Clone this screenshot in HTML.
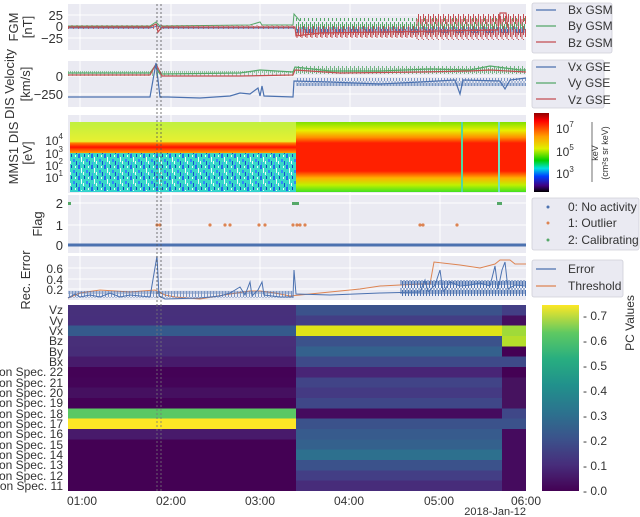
<!DOCTYPE html>
<html><head><meta charset="utf-8"><style>
html,body{margin:0;padding:0;background:#fff;}
svg{display:block;font-family:"Liberation Sans",sans-serif;}
</style></head><body>
<svg width="640" height="517" viewBox="0 0 640 517" xmlns="http://www.w3.org/2000/svg">
<defs>
<linearGradient id="sr" x1="0" y1="0" x2="0" y2="1">
<stop offset="0" stop-color="#7fe000"/><stop offset="0.12" stop-color="#e8f000"/><stop offset="0.22" stop-color="#ff9000"/><stop offset="0.3" stop-color="#ff2000"/><stop offset="0.7" stop-color="#ff2000"/><stop offset="0.8" stop-color="#ffb000"/><stop offset="0.9" stop-color="#c0f000"/><stop offset="1" stop-color="#40e020"/>
</linearGradient>
<linearGradient id="sl" x1="0" y1="0" x2="0" y2="1">
<stop offset="0" stop-color="#c0f040"/><stop offset="0.28" stop-color="#e8f030"/><stop offset="0.3" stop-color="#ff8000"/><stop offset="0.36" stop-color="#ff1000"/><stop offset="0.44" stop-color="#ffa000"/><stop offset="0.46" stop-color="#40e0c0"/><stop offset="1" stop-color="#30d0d0"/>
</linearGradient>
<linearGradient id="cb" x1="0" y1="0" x2="0" y2="1">
<stop offset="0" stop-color="#900000"/><stop offset="0.1" stop-color="#ff0000"/><stop offset="0.3" stop-color="#ffa000"/><stop offset="0.45" stop-color="#e0f000"/><stop offset="0.6" stop-color="#00d000"/><stop offset="0.7" stop-color="#00e0e0"/><stop offset="0.8" stop-color="#0040ff"/><stop offset="0.92" stop-color="#400080"/><stop offset="1" stop-color="#000"/>
</linearGradient>
<linearGradient id="vir" x1="0" y1="1" x2="0" y2="0">
<stop offset="0" stop-color="#440154"/><stop offset="0.14" stop-color="#472d7b"/><stop offset="0.28" stop-color="#3b528b"/><stop offset="0.42" stop-color="#2c728e"/><stop offset="0.57" stop-color="#21918c"/><stop offset="0.71" stop-color="#28ae80"/><stop offset="0.85" stop-color="#5ec962"/><stop offset="1" stop-color="#fde725"/>
</linearGradient>
<pattern id="noise" width="13" height="11" patternUnits="userSpaceOnUse">
<rect width="13" height="11" fill="#38d8c8"/><rect x="0" y="0" width="2" height="4" fill="#2060f0"/><rect x="3" y="3" width="1" height="5" fill="#ffffff"/><rect x="6" y="0" width="1" height="3" fill="#1030c0"/><rect x="8" y="5" width="2" height="3" fill="#3080ff"/><rect x="5" y="7" width="1" height="3" fill="#fff"/><rect x="10" y="1" width="1" height="2" fill="#fff"/><rect x="11" y="7" width="1" height="4" fill="#1040d0"/><rect x="1" y="8" width="1" height="3" fill="#4090ff"/>
</pattern>
<pattern id="rn" width="5" height="13" patternUnits="userSpaceOnUse">
<line x1="0.5" y1="3" x2="0.5" y2="11" stroke="#c44e52"/><line x1="2" y1="6" x2="2" y2="13" stroke="#c44e52"/><line x1="3.5" y1="0" x2="3.5" y2="9" stroke="#c44e52"/>
</pattern>
<pattern id="gn" width="4" height="11" patternUnits="userSpaceOnUse">
<line x1="0.5" y1="2" x2="0.5" y2="10" stroke="#55a868"/><line x1="2.5" y1="0" x2="2.5" y2="7" stroke="#55a868"/>
</pattern>
<pattern id="bn" width="3" height="9" patternUnits="userSpaceOnUse">
<line x1="0.5" y1="2" x2="0.5" y2="9" stroke="#4c72b0"/><line x1="2" y1="0" x2="2" y2="6" stroke="#4c72b0"/>
</pattern>
</defs>

<g fill="#eaeaf2">
<rect x="68" y="4" width="458" height="46"/>
<rect x="68" y="61" width="458" height="46"/>
<rect x="68" y="115" width="458" height="78"/>
<rect x="68" y="195" width="458" height="58"/>
<rect x="68" y="256" width="458" height="44"/>
</g>
<g stroke="#fff" stroke-width="1">
<line x1="68" y1="15" x2="526" y2="15"/><line x1="68" y1="27" x2="526" y2="27"/><line x1="68" y1="38" x2="526" y2="38"/>
<line x1="68" y1="76" x2="526" y2="76"/><line x1="68" y1="94" x2="526" y2="94"/>
<line x1="68" y1="203" x2="526" y2="203"/><line x1="68" y1="225" x2="526" y2="225"/><line x1="68" y1="245" x2="526" y2="245"/>
<line x1="68" y1="268" x2="526" y2="268"/><line x1="68" y1="279" x2="526" y2="279"/><line x1="68" y1="289" x2="526" y2="289"/>
</g>
<g stroke="#fff" stroke-width="1">
<line x1="80" y1="4" x2="80" y2="300"/><line x1="171" y1="4" x2="171" y2="300"/><line x1="260" y1="4" x2="260" y2="300"/><line x1="350" y1="4" x2="350" y2="300"/><line x1="440" y1="4" x2="440" y2="300"/>
</g>

<!-- FGM -->
<rect x="296" y="18" width="230" height="12" fill="url(#gn)"/>
<rect x="296" y="27" width="230" height="6" fill="url(#bn)"/>
<rect x="296" y="26" width="120" height="12" fill="url(#rn)"/>
<rect x="416" y="14" width="110" height="26" fill="url(#rn)"/>
<polyline fill="none" stroke="#4c72b0" stroke-width="1" points="68,28 150,28 158,26 162,28 295,28"/>
<polyline fill="none" stroke="#55a868" stroke-width="1" points="68,26 150,26 156,22 160,26 250,25 260,22 262,25 293,25 294,14 300,21"/>
<polyline fill="none" stroke="#c44e52" stroke-width="1.2" points="68,27 150,27 156,24 158,32 162,27 295,27 296,36 320,33 498,30 500,13 506,13 508,28"/>
<rect x="68" y="25" width="226" height="4" fill="url(#rn)" opacity="0.8"/>
<!-- DIS vel -->
<rect x="296" y="66" width="230" height="8" fill="url(#gn)" opacity="0.8"/>
<rect x="68" y="71" width="226" height="6" fill="url(#gn)" opacity="0.6"/>
<polyline fill="none" stroke="#55a868" stroke-width="1.2" points="68,73 150,73 155,66 160,74 240,73 260,70 293,72 295,67 330,71 380,71 430,69 470,70 490,66 520,70 526,70"/>
<polyline fill="none" stroke="#c44e52" stroke-width="1.2" points="68,75 150,75 156,64 162,76 240,76 293,75 295,70 340,73 420,72 470,71 490,70 526,72"/>
<rect x="296" y="78" width="230" height="8" fill="url(#bn)" opacity="0.7"/>
<polyline fill="none" stroke="#4c72b0" stroke-width="1.2" points="68,97 150,97 156,63 160,97 168,97 200,98 230,96 240,93 250,94 258,88 260,96 262,86 264,96 293,97 294,81 330,82 380,84 420,82 455,80 460,94 463,80 500,81 505,89 510,80 526,78"/>

<!-- Spectrogram -->
<rect x="70" y="122" width="226" height="70" fill="url(#sl)"/>
<rect x="70" y="153" width="226" height="38" fill="url(#noise)" opacity="0.9"/>
<rect x="296" y="122" width="230" height="70" fill="url(#sr)"/>
<rect x="461" y="122" width="2" height="70" fill="#50d8a0"/>
<rect x="498" y="122" width="2" height="70" fill="#70e0c0"/>
<rect x="534" y="113" width="15" height="79" fill="url(#cb)"/>
<g font-size="12" fill="#333"><text x="556" y="133">10<tspan font-size="8" dy="-6">7</tspan></text><text x="556" y="156">10<tspan font-size="8" dy="-6">5</tspan></text><text x="556" y="178">10<tspan font-size="8" dy="-6">3</tspan></text></g>
<text transform="translate(598,153) rotate(-90)" font-size="9" fill="#333" text-anchor="middle">keV</text>
<text transform="translate(608,153) rotate(-90)" font-size="9" fill="#333" text-anchor="middle">(cm²s sr keV)</text>
<line x1="592" y1="122" x2="592" y2="182" stroke="#333" stroke-width="0.7"/>

<!-- Flag -->
<line x1="68" y1="245" x2="526" y2="245" stroke="#4c72b0" stroke-width="3"/>
<g fill="#dd8452"><circle cx="157" cy="225" r="1.6"/><circle cx="160" cy="225" r="1.6"/><circle cx="210" cy="225" r="1.6"/><circle cx="225" cy="225" r="1.6"/><circle cx="230" cy="225" r="1.6"/><circle cx="259" cy="225" r="1.6"/><circle cx="265" cy="225" r="1.6"/><circle cx="293" cy="225" r="1.6"/><circle cx="297" cy="225" r="1.6"/><circle cx="300" cy="225" r="1.6"/><circle cx="305" cy="225" r="1.6"/><circle cx="420" cy="225" r="1.6"/><circle cx="423" cy="225" r="1.6"/><circle cx="457" cy="225" r="1.6"/></g>
<g fill="#55a868"><rect x="68" y="202" width="3" height="3"/><rect x="292" y="202" width="7" height="3"/><rect x="497" y="202" width="5" height="3"/></g>

<!-- Rec error -->
<polyline fill="none" stroke="#dd8452" stroke-width="1" points="68,298 80,293 100,290 130,292 155,290 165,295 175,297 200,299 230,294 250,291 260,291 275,293 290,296 320,293 360,289 380,286 400,285 420,284 430,284 434,262 460,265 480,268 495,264 500,260 510,260 515,264 526,264"/>
<rect x="68" y="291" width="226" height="7" fill="url(#bn)" opacity="0.7"/>
<rect x="400" y="280" width="126" height="16" fill="url(#bn)"/>
<polyline fill="none" stroke="#4c72b0" stroke-width="1" points="68,298 75,294 80,297 90,295 100,297 110,293 120,297 130,295 150,297 157,256 159,296 165,299 200,298 220,296 230,293 240,287 245,295 250,282 252,296 258,290 262,282 264,295 280,297 293,297 294,270 296,294 330,295 380,293 420,292 425,280 428,292 435,285 440,270 443,292 450,282 460,286 470,285 480,283 490,286 495,266 498,289 502,270 505,262 508,289 515,285 526,286"/>

<g stroke="#555" stroke-width="0.8" stroke-dasharray="2,2">
<line x1="157" y1="4" x2="157" y2="491"/><line x1="161" y1="4" x2="161" y2="491"/>
</g>

<!-- Heatmap -->
<g shape-rendering="crispEdges">
<rect x="68" y="305" width="228" height="11" fill="#47307b"/><rect x="296" y="305" width="206" height="11" fill="#3b528b"/><rect x="502" y="305" width="24" height="11" fill="#433e85"/>
<rect x="68" y="315.3" width="228" height="11" fill="#472f7c"/><rect x="296" y="315.3" width="206" height="11" fill="#433e85"/><rect x="502" y="315.3" width="24" height="11" fill="#450f5f"/>
<rect x="68" y="325.7" width="228" height="11" fill="#355a8c"/><rect x="296" y="325.7" width="206" height="11" fill="#dfe318"/><rect x="502" y="325.7" width="24" height="11" fill="#a0da39"/>
<rect x="68" y="336" width="228" height="11" fill="#482f79"/><rect x="296" y="336" width="206" height="11" fill="#3b528b"/><rect x="502" y="336" width="24" height="11" fill="#b5de2b"/>
<rect x="68" y="346.3" width="228" height="11" fill="#472d78"/><rect x="296" y="346.3" width="206" height="11" fill="#34618d"/><rect x="502" y="346.3" width="24" height="11" fill="#440154"/>
<rect x="68" y="356.7" width="228" height="11" fill="#471b6b"/><rect x="296" y="356.7" width="206" height="11" fill="#3e4a89"/><rect x="502" y="356.7" width="24" height="11" fill="#3e4a89"/>
<rect x="68" y="367" width="228" height="11" fill="#440256"/><rect x="296" y="367" width="206" height="11" fill="#482576"/><rect x="502" y="367" width="24" height="11" fill="#440154"/>
<rect x="68" y="377.3" width="228" height="11" fill="#440458"/><rect x="296" y="377.3" width="206" height="11" fill="#414487"/><rect x="502" y="377.3" width="24" height="11" fill="#46125f"/>
<rect x="68" y="387.7" width="228" height="11" fill="#451060"/><rect x="296" y="387.7" width="206" height="11" fill="#443a83"/><rect x="502" y="387.7" width="24" height="11" fill="#46125f"/>
<rect x="68" y="398" width="228" height="11" fill="#440256"/><rect x="296" y="398" width="206" height="11" fill="#3f4788"/><rect x="502" y="398" width="24" height="11" fill="#46125f"/>
<rect x="68" y="408.3" width="228" height="11" fill="#5ac864"/><rect x="296" y="408.3" width="206" height="11" fill="#450b5e"/><rect x="502" y="408.3" width="24" height="11" fill="#3f4788"/>
<rect x="68" y="418.7" width="228" height="11" fill="#fde725"/><rect x="296" y="418.7" width="206" height="11" fill="#3b528b"/><rect x="502" y="418.7" width="24" height="11" fill="#3b528b"/>
<rect x="68" y="429" width="228" height="11" fill="#481a6b"/><rect x="296" y="429" width="206" height="11" fill="#375b8d"/><rect x="502" y="429" width="24" height="11" fill="#450b5e"/>
<rect x="68" y="439.3" width="228" height="11" fill="#440154"/><rect x="296" y="439.3" width="206" height="11" fill="#34618d"/><rect x="502" y="439.3" width="24" height="11" fill="#450b5e"/>
<rect x="68" y="449.7" width="228" height="11" fill="#440154"/><rect x="296" y="449.7" width="206" height="11" fill="#2d708e"/><rect x="502" y="449.7" width="24" height="11" fill="#450b5e"/>
<rect x="68" y="460" width="228" height="11" fill="#440154"/><rect x="296" y="460" width="206" height="11" fill="#3b528b"/><rect x="502" y="460" width="24" height="11" fill="#450b5e"/>
<rect x="68" y="470.3" width="228" height="11" fill="#440154"/><rect x="296" y="470.3" width="206" height="11" fill="#433e85"/><rect x="502" y="470.3" width="24" height="11" fill="#450b5e"/>
<rect x="68" y="480.7" width="228" height="10.3" fill="#440154"/><rect x="296" y="480.7" width="206" height="10.3" fill="#472c7a"/><rect x="502" y="480.7" width="24" height="10.3" fill="#450b5e"/>
</g>
<g stroke="#777" stroke-width="0.8" stroke-dasharray="2,2">
<line x1="157" y1="305" x2="157" y2="491"/><line x1="161" y1="305" x2="161" y2="491"/>
</g>
<g font-size="12" fill="#333" text-anchor="end">
<text x="63" y="314">Vz</text><text x="63" y="325">Vy</text><text x="63" y="335">Vx</text><text x="63" y="345">Bz</text><text x="63" y="356">By</text><text x="63" y="366">Bx</text>
<text x="63" y="376">Ion Spec. 22</text><text x="63" y="387">Ion Spec. 21</text><text x="63" y="397">Ion Spec. 20</text><text x="63" y="407">Ion Spec. 19</text><text x="63" y="418">Ion Spec. 18</text><text x="63" y="428">Ion Spec. 17</text><text x="63" y="438">Ion Spec. 16</text><text x="63" y="449">Ion Spec. 15</text><text x="63" y="459">Ion Spec. 14</text><text x="63" y="469">Ion Spec. 13</text><text x="63" y="480">Ion Spec. 12</text><text x="63" y="490">Ion Spec. 11</text>
</g>
<rect x="542" y="305" width="37" height="186" fill="url(#vir)"/>
<g font-size="12" fill="#333">
<text x="583" y="495">- 0.0</text><text x="583" y="470">- 0.1</text><text x="583" y="445">- 0.2</text><text x="583" y="420">- 0.3</text><text x="583" y="395">- 0.4</text><text x="583" y="370">- 0.5</text><text x="583" y="345">- 0.6</text><text x="583" y="320">- 0.7</text>
</g>
<text transform="translate(634,323) rotate(-90)" font-size="12" fill="#333" text-anchor="middle">PC Values</text>

<g font-size="12" fill="#333" text-anchor="middle">
<text x="82" y="505">01:00</text><text x="171" y="505">02:00</text><text x="260" y="505">03:00</text><text x="349" y="505">04:00</text><text x="439" y="505">05:00</text><text x="526" y="505">06:00</text>
</g>
<text x="526" y="515" font-size="11" fill="#333" text-anchor="end">2018-Jan-12</text>

<g font-size="13" fill="#333" text-anchor="end">
<text x="63" y="20">25</text><text x="63" y="31">0</text><text x="63" y="43">−25</text>
<text x="63" y="81">0</text><text x="63" y="99">−250</text>
<text x="63" y="208">2</text><text x="63" y="230">1</text><text x="63" y="250">0</text>
</g>
<g font-size="12" fill="#333" text-anchor="end">
<text x="63" y="145">10<tspan font-size="8" dy="-6">4</tspan></text><text x="63" y="158">10<tspan font-size="8" dy="-6">3</tspan></text><text x="63" y="170">10<tspan font-size="8" dy="-6">2</tspan></text><text x="63" y="182">10<tspan font-size="8" dy="-6">1</tspan></text>
<text x="63" y="273">0.6</text><text x="63" y="284">0.4</text><text x="63" y="294">0.2</text>
</g>
<g font-size="13" fill="#333" text-anchor="middle">
<text transform="translate(18,27) rotate(-90)">FGM</text><text transform="translate(32,27) rotate(-90)">[nT]</text>
<text transform="translate(14,84) rotate(-90)">DIS Velocity</text><text transform="translate(30,84) rotate(-90)">[km/s]</text>
<text transform="translate(18,153) rotate(-90)">MMS1 DIS</text><text transform="translate(32,153) rotate(-90)">[eV]</text>
<text transform="translate(42,224) rotate(-90)">Flag</text>
<text transform="translate(30,280) rotate(-90)">Rec. Error</text>
</g>

<g fill="#eaeaf2" stroke="#cfcfd8" stroke-width="0.8">
<rect x="532" y="3" width="80" height="50" rx="2"/>
<rect x="532" y="60" width="72" height="48" rx="2"/>
<rect x="532" y="198" width="107" height="52" rx="2"/>
<rect x="532" y="260" width="91" height="37" rx="2"/>
</g>
<g stroke-width="1.3">
<line x1="536" y1="10" x2="556" y2="10" stroke="#4c72b0"/><line x1="536" y1="26" x2="556" y2="26" stroke="#55a868"/><line x1="536" y1="42" x2="556" y2="42" stroke="#c44e52"/>
<line x1="536" y1="67" x2="556" y2="67" stroke="#4c72b0"/><line x1="536" y1="83" x2="556" y2="83" stroke="#55a868"/><line x1="536" y1="99" x2="556" y2="99" stroke="#c44e52"/>
<line x1="536" y1="269" x2="556" y2="269" stroke="#4c72b0"/><line x1="536" y1="286" x2="556" y2="286" stroke="#dd8452"/>
</g>
<circle cx="548" cy="207" r="1.5" fill="#4c72b0"/><circle cx="548" cy="223" r="1.5" fill="#dd8452"/><circle cx="548" cy="240" r="1.5" fill="#55a868"/>
<g font-size="12" fill="#333">
<text x="568" y="14">Bx GSM</text><text x="568" y="30">By GSM</text><text x="568" y="47">Bz GSM</text>
<text x="568" y="71">Vx GSE</text><text x="568" y="87">Vy GSE</text><text x="568" y="104">Vz GSE</text>
<text x="568" y="211">0: No activity</text><text x="568" y="227">1: Outlier</text><text x="568" y="244">2: Calibrating</text>
<text x="568" y="273">Error</text><text x="568" y="290">Threshold</text>
</g>
</svg>
</body></html>
